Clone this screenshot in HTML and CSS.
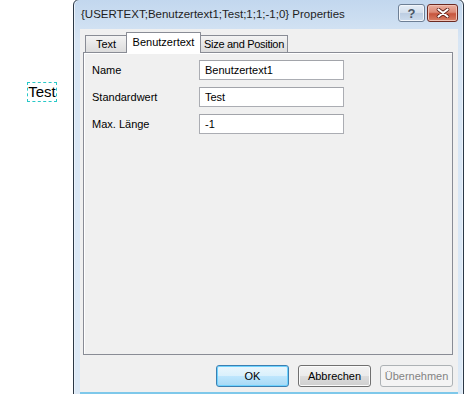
FILE: index.html
```html
<!DOCTYPE html>
<html>
<head>
<meta charset="utf-8">
<link rel="stylesheet" href="styles.css">
</head>
<body>
<div class="canvas">
  <div class="field-test">Test</div>
  <div class="window">
    <div class="titlebar">
      <div class="title">{USERTEXT;Benutzertext1;Test;1;1;-1;0} Properties</div>
      <div class="tbuttons">
        <div class="tbtn help">?</div>
        <div class="tbtn close">
          <svg width="14" height="10" viewBox="0 0 14 10"><path d="M2.5 1.5 L11.5 8.5 M11.5 1.5 L2.5 8.5" stroke="#5a1a12" stroke-width="3.6" stroke-linecap="round"/><path d="M2.5 1.5 L11.5 8.5 M11.5 1.5 L2.5 8.5" stroke="#fff" stroke-width="2.2" stroke-linecap="round"/></svg>
        </div>
      </div>
    </div>
    <div class="client">
      <div class="tabs">
        <div class="tab t1">Text</div>
        <div class="tab t2 active">Benutzertext</div>
        <div class="tab t3">Size and Position</div>
      </div>
      <div class="pane">
        <div class="row"><span class="label">Name</span><div class="input">Benutzertext1</div></div>
        <div class="row"><span class="label">Standardwert</span><div class="input">Test</div></div>
        <div class="row"><span class="label">Max. Länge</span><div class="input">-1</div></div>
      </div>
      <div class="buttons">
        <div class="btn default">OK</div>
        <div class="btn">Abbrechen</div>
        <div class="btn disabled">Übernehmen</div>
      </div>
    </div>
  </div>
</div>
</body>
</html>
```

FILE: styles.css
```css
* {
  box-sizing: border-box;
}
html, body {
  margin: 0;
  padding: 0;
  background: #ffffff;
}
.canvas {
  position: relative;
  width: 464px;
  height: 394px;
  overflow: hidden;
  font-family: "Liberation Sans", Arial, sans-serif;
}
.field-test {
  position: absolute;
  left: 27px;
  top: 82px;
  width: 30px;
  height: 20px;
  border: 1px dashed #28c8c8;
  font-size: 15px;
  line-height: 18px;
  color: #000;
  text-align: center;
}
.window {
  position: absolute;
  left: 73px;
  top: -1px;
  width: 391px;
  height: 396px;
  border: 1px solid #2b3846;
  border-radius: 6px 6px 0 0;
  background: linear-gradient(to bottom, #c2d7ee 0px, #d7e5f4 40px, #dce9f6 100%);
  display: flex;
  flex-direction: column;
  padding: 0 5px 0 6px;
  box-shadow: inset 1px 0 0 #eaf2fb, inset -1px 0 0 #eaf2fb;
}
.titlebar {
  height: 29px;
  display: flex;
  align-items: flex-start;
  justify-content: space-between;
  flex-shrink: 0;
}
.title {
  font-size: 11.5px;
  color: #1e1e1e;
  padding-top: 8px;
  padding-left: 1px;
}
.tbuttons {
  display: flex;
  gap: 2px;
  padding-top: 4px;
  padding-right: 0;
}
.tbtn {
  height: 18px;
  border: 1px solid #6d7f95;
  border-radius: 3px;
  display: flex;
  align-items: center;
  justify-content: center;
}
.help {
  width: 27px;
  background: linear-gradient(to bottom, #e6eef7 0%, #d2deec 50%, #bccde2 51%, #cddced 100%);
  color: #4a5666;
  font-weight: bold;
  font-size: 13px;
  box-shadow: inset 0 0 0 1px #f2f6fb;
}
.close {
  width: 31px;
  border-color: #6b2a22;
  background: linear-gradient(to bottom, #eab0a1 0%, #dc8a76 45%, #c7553d 55%, #d98066 100%);
  box-shadow: inset 0 0 0 1px #f0c2b5;
}
.client {
  flex: 1;
  background: #f0f0f0;
  display: flex;
  flex-direction: column;
  padding: 4px 5px 0 3px;
  border-bottom: 2px solid #7ec8ea;
  margin-bottom: 0;
}
.tabs {
  display: flex;
  align-items: flex-end;
  padding-left: 2px;
  height: 19px;
  position: relative;
  z-index: 1;
  flex-shrink: 0;
}
.tab {
  height: 17px;
  border: 1px solid #898c95;
  border-bottom: none;
  background: linear-gradient(to bottom, #f3f3f3, #dcdcdc);
  font-size: 11px;
  line-height: 17px;
  text-align: center;
  color: #000;
  margin-right: -1px;
}
.t1 { width: 42px; }
.t2 { width: 75px; }
.t3 { width: 88px; letter-spacing: -0.3px; }
.tab.active {
  height: 21px;
  margin-bottom: -1px;
  background: #ffffff;
  line-height: 18px;
  position: relative;
  z-index: 2;
  border-radius: 1px 1px 0 0;
}
.pane {
  height: 303px;
  flex-shrink: 0;
  border: 1px solid #898c95;
  background: #f0f0f0;
  box-shadow: inset 1px 1px 0 #ffffff;
  padding: 7px 0 0 8px;
  display: flex;
  flex-direction: column;
  gap: 7px;
}
.row {
  display: flex;
  align-items: center;
  height: 20px;
}
.label {
  width: 107px;
  font-size: 11px;
  color: #000;
}
.input {
  width: 145px;
  height: 20px;
  border: 1px solid #abadb3;
  border-top-color: #a2a4aa;
  background: #fff;
  font-size: 11px;
  line-height: 18px;
  padding-left: 5px;
}
.buttons {
  display: flex;
  justify-content: flex-end;
  gap: 9px;
  padding-top: 10px;
  padding-right: 0;
}
.btn {
  width: 73px;
  height: 22px;
  border: 1px solid #707070;
  border-radius: 3px;
  background: linear-gradient(to bottom, #f2f2f2 0%, #ebebeb 50%, #dddddd 51%, #cfcfcf 100%);
  box-shadow: inset 0 0 0 1px #fbfbfb;
  font-size: 11px;
  line-height: 20px;
  text-align: center;
  color: #000;
}
.btn.default {
  border-color: #3c7fb1;
  background: linear-gradient(to bottom, #eaf6fd 0%, #d9f0fc 50%, #bee6fd 51%, #a7d9f5 100%);
  box-shadow: inset 0 0 0 1px #6fd3ff;
}
.btn.disabled {
  border-color: #adb2b5;
  background: #f4f4f4;
  box-shadow: none;
  color: #838383;
}
```
